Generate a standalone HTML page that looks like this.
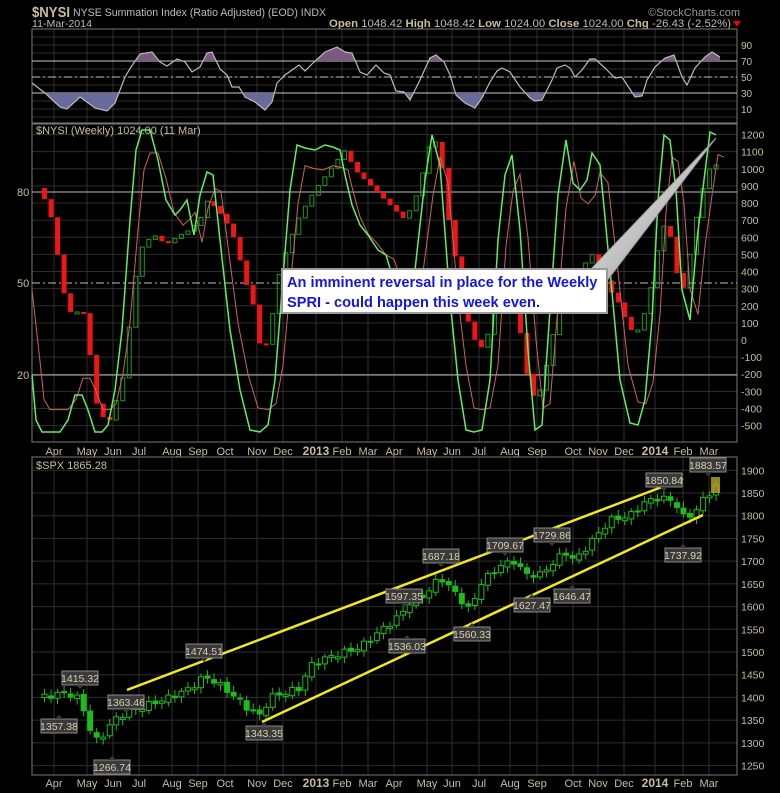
<!DOCTYPE html>
<html><head><meta charset="utf-8">
<style>
html,body{margin:0;padding:0;background:#000;}
body{width:780px;height:793px;overflow:hidden;position:relative;font-family:"Liberation Sans",sans-serif;}
svg{position:absolute;left:0;top:0;}
.callout{position:absolute;left:281px;top:268px;width:327px;height:46px;background:#fff;border:2px solid #9a9a9a;box-sizing:border-box;color:#1414e6;font-weight:bold;font-size:14.6px;line-height:20px;padding:3px 0 0 4px;white-space:nowrap;}
</style></head><body>
<svg id="s" width="780" height="793" xmlns="http://www.w3.org/2000/svg" font-family="Liberation Sans, sans-serif">
<defs><linearGradient id="wg" x1="0" y1="0" x2="1" y2="1"><stop offset="0" stop-color="#fff"/><stop offset="1" stop-color="#888"/></linearGradient></defs>
<text x="32" y="17" fill="#c8bf98" font-size="15" font-weight="bold" textLength="38" lengthAdjust="spacingAndGlyphs">$NYSI</text>
<text x="73" y="16" fill="#bbb" font-size="11" textLength="253" lengthAdjust="spacingAndGlyphs">NYSE Summation Index (Ratio Adjusted) (EOD)  INDX</text>
<text x="740" y="16" fill="#999" font-size="11" text-anchor="end">©StockCharts.com</text>
<text x="32" y="27" fill="#bbb" font-size="10.5" textLength="60" lengthAdjust="spacingAndGlyphs">11-Mar-2014</text>
<text x="329" y="27" fill="#bbb" font-size="11" textLength="402" lengthAdjust="spacingAndGlyphs"><tspan fill="#c8bf98" font-weight="bold">Open</tspan> 1048.42 <tspan fill="#c8bf98" font-weight="bold">High</tspan> 1048.42 <tspan fill="#c8bf98" font-weight="bold">Low</tspan> 1024.00 <tspan fill="#c8bf98" font-weight="bold">Close</tspan> 1024.00 <tspan fill="#c8bf98" font-weight="bold">Chg</tspan> -26.43 (-2.52%)</text>
<polygon points="733,21 741,21 737,27" fill="#e00"/>
<g id="g"></g>
</svg>
<div class="callout">An imminent reversal in place for the Weekly<br>SPRI - could happen this week even.</div>
<script>
var NS="http://www.w3.org/2000/svg",G=document.getElementById('g');
function el(t,a){var e=document.createElementNS(NS,t);for(var k in a)e.setAttribute(k,a[k]);G.appendChild(e);return e;}
function txt(x,y,s,a){var e=el('text',Object.assign({x:x,y:y,fill:'#c8bf98','font-size':11},a||{}));e.textContent=s;return e;}
function interp(p,x){if(x<=p[0][0])return p[0][1];for(var i=1;i<p.length;i++){if(x<=p[i][0]){var t=(x-p[i-1][0])/(p[i][0]-p[i-1][0]);return p[i-1][1]+t*(p[i][1]-p[i-1][1]);}}return p[p.length-1][1];}
var L=32,R=737;
var months=[[54,'Apr'],[87,'May'],[113,'Jun'],[139,'Jul'],[172,'Aug'],[198,'Sep'],[225,'Oct'],[257,'Nov'],[283,'Dec'],[316,'2013',1],[342,'Feb'],[368,'Mar'],[394,'Apr'],[427,'May'],[452,'Jun'],[479,'Jul'],[510,'Aug'],[537,'Sep'],[573,'Oct'],[598,'Nov'],[624,'Dec'],[655,'2014',1],[683,'Feb'],[709,'Mar']];
function panel(top,bot,hlines){
  hlines.forEach(function(y){el('line',{x1:L,x2:R,y1:y,y2:y,stroke:'#2e2e2e'});});
  months.forEach(function(m){el('line',{x1:m[0],x2:m[0],y1:top,y2:bot,stroke:'#2e2e2e'});});
  el('rect',{x:L,y:top,width:R-L,height:bot-top,fill:'none',stroke:'#777'});
}
function axis(y){months.forEach(function(m){txt(m[0],y,m[1],m[2]?{'font-weight':'bold','font-size':12,'text-anchor':'middle'}:{'text-anchor':'middle'});});}
var rt=29,rb=123;var ry=function(v){return 61-(v-70)*0.8;};
var rh=[];for(var v=0;v<=100;v+=10)rh.push(ry(v));panel(rt,rb,rh);
[[70],[30]].forEach(function(v){el('line',{x1:L,x2:R,y1:ry(v[0]),y2:ry(v[0]),stroke:'#ccc'});});
el('line',{x1:L,x2:R,y1:ry(50),y2:ry(50),stroke:'#bbb','stroke-dasharray':'8,3,2,3'});
[90,70,50,30,10].forEach(function(v){txt(741,ry(v)+4,v,{'font-size':10});});
var rp=[[32,83],[45,93],[60,107],[67,109],[80,97],[95,108],[107,111],[115,103],[125,77],[131,67],[140,54],[152,52],[160,62],[167,66],[177,59],[185,62],[192,72],[200,67],[207,53],[212,52],[220,69],[227,75],[232,87],[239,87],[245,97],[255,102],[265,110],[272,102],[277,83],[285,75],[299,65],[305,71],[314,62],[325,52],[337,47],[345,52],[352,53],[360,72],[367,75],[376,65],[384,73],[390,75],[396,91],[404,92],[410,100],[419,82],[430,58],[436,55],[444,62],[450,75],[456,95],[465,103],[475,108],[482,98],[490,82],[497,71],[502,68],[510,72],[520,87],[530,98],[535,101],[542,100],[552,80],[557,68],[565,65],[570,68],[575,77],[582,70],[590,59],[595,59],[605,68],[615,78],[622,77],[635,97],[642,96],[647,80],[655,67],[665,58],[674,55],[682,77],[687,85],[695,68],[705,57],[712,52],[720,57]];
var y70=ry(70),y30=ry(30),up='',dn='';
for(var x=32;x<=720;x+=1){var y=interp(rp,x);up+=x+','+Math.min(y,y70)+' ';dn+=x+','+Math.max(y,y30)+' ';}
el('polygon',{points:'32,'+y70+' '+up+'720,'+y70,fill:'#7a5a80'});
el('polygon',{points:'32,'+y30+' '+dn+'720,'+y30,fill:'#6a6a9a'});
el('polyline',{points:rp.map(function(p){return p.join(',')}).join(' '),fill:'none',stroke:'#bbb','stroke-width':1.2});
var nt=124,nb=442;var ny=function(v){return 340-v*0.1712;};
var nh=[];for(var v=-600;v<=1300;v+=100){var yy=ny(v);if(yy>nt&&yy<nb)nh.push(yy);}panel(nt,nb,nh);
for(var v=-500;v<=1200;v+=100)txt(741,ny(v)+4,v,{'font-size':10.5});
[192,375].forEach(function(y){el('line',{x1:L,x2:R,y1:y,y2:y,stroke:'#bbb'});});
el('line',{x1:L,x2:R,y1:283,y2:283,stroke:'#bbb','stroke-dasharray':'8,3,2,3'});
txt(17,196,'80');txt(17,287,'50');txt(17,379,'20');
txt(36,134,'$NYSI (Weekly) 1024.00 (11 Mar)',{'font-size':11,fill:'#c8bf98'});
var gp=[[32,375],[36,420],[42,432],[60,432],[68,420],[75,395],[82,395],[88,410],[95,432],[102,432],[108,425],[115,390],[122,330],[130,220],[136,150],[142,130],[150,130],[158,160],[166,200],[175,215],[180,210],[187,200],[194,235],[200,195],[207,172],[213,175],[220,240],[230,330],[240,390],[250,430],[260,432],[268,425],[275,380],[282,290],[290,190],[297,145],[305,148],[315,150],[325,145],[333,147],[340,150],[345,175],[352,205],[360,225],[368,235],[378,250],[386,255],[395,285],[405,300],[415,270],[425,180],[432,135],[440,165],[450,300],[458,380],[466,430],[474,432],[482,430],[490,380],[498,240],[505,175],[512,155],[520,230],[528,350],[535,430],[542,425],[550,310],[558,195],[566,140],[573,183],[580,190],[587,180],[592,153],[600,165],[610,270],[620,380],[630,423],[638,425],[645,400],[652,320],[658,200],[664,135],[670,140],[676,190],[682,290],[690,320],[697,240],[704,180],[710,132],[716,135]];
var redp=gp.map(function(p){return [p[0]+8,p[1]*0.85+283*0.15];});redp.unshift([32,290]);
var nyp=[[38,188],[45,200],[52,220],[60,270],[67,310],[75,315],[82,305],[88,335],[95,400],[102,415],[108,425],[115,405],[125,370],[132,300],[140,250],[148,240],[157,235],[165,245],[180,235],[190,230],[200,220],[208,200],[218,210],[228,225],[235,240],[245,280],[255,310],[262,360],[270,330],[280,270],[290,240],[300,215],[315,190],[330,170],[345,150],[355,170],[365,180],[375,190],[385,200],[395,210],[405,220],[415,200],[425,165],[432,135],[440,150],[450,230],[460,280],[470,330],[480,350],[490,330],[500,270],[510,280],[520,330],[528,380],[535,400],[540,390],[548,360],[560,300],[570,320],[580,280],[590,250],[600,270],[610,290],[620,305],[630,330],[640,330],[648,300],[655,270],[660,230],[665,225],[672,240],[678,280],[685,290],[692,240],[700,200],[708,170],[716,165]];
var st=6.52,prev=interp(nyp,38);
for(var x=38+st;x<=717;x+=st){var c=interp(nyp,x);var t=Math.min(prev,c),h=Math.max(2,Math.abs(c-prev));
 if(c>prev)el('rect',{x:x-2.5,y:t,width:5,height:h,fill:'#f01414'});else el('rect',{x:x-2,y:t,width:4,height:h,fill:'none',stroke:'#1a9a1a'});prev=c;}
el('polyline',{points:redp.map(function(p){return p.join(',')}).join(' '),fill:'none',stroke:'#d06060','stroke-width':1});
el('polyline',{points:gp.map(function(p){return p.join(',')}).join(' '),fill:'none',stroke:'#5ef05e','stroke-width':1.5});
axis(455);
var st2=457,sb=775;var sy=function(v){return 493-(v-1850)*0.4543;};
var sh=[];for(var v=1250;v<=1900;v+=50)sh.push(sy(v));panel(st2,sb,sh);
for(var v=1250;v<=1900;v+=50)txt(741,sy(v)+4,v,{'font-size':10.5});
txt(36,469,'$SPX 1865.28',{'font-size':11});
var sp=[[38,1400],[54,1405],[62,1410],[72,1405],[80,1395],[84,1370],[90,1330],[98,1300],[105,1325],[112,1345],[120,1360],[130,1370],[150,1385],[170,1400],[190,1420],[204,1445],[210,1440],[218,1430],[230,1410],[245,1380],[260,1360],[270,1400],[285,1410],[300,1420],[310,1470],[330,1490],[360,1510],[385,1555],[400,1580],[410,1610],[425,1625],[440,1665],[455,1630],[470,1590],[480,1650],[500,1690],[515,1700],[525,1670],[540,1670],[555,1700],[565,1720],[575,1700],[590,1740],[610,1790],[630,1800],[645,1830],[660,1840],[675,1830],[685,1790],[695,1810],[705,1840],[716,1865]];
var pv=interp(sp,38),i=0;
for(var x=38+st;x<=717;x+=st){i++;var c=interp(sp,x)+7*Math.sin(i*2.3);var o=pv+3*Math.cos(i*1.7);
 var t=sy(Math.max(o,c)),b=sy(Math.min(o,c)),h=Math.max(2,b-t);
 el('line',{x1:x,x2:x,y1:t-3-3*Math.abs(Math.sin(i)),y2:t+h+3+3*Math.abs(Math.cos(i)),stroke:'#1cbc1c'});
 if(c>o)el('rect',{x:x-2.5,y:t,width:5,height:h,fill:'#000',stroke:'#1cbc1c'});else el('rect',{x:x-3,y:t,width:6,height:h,fill:'#1cbc1c'});pv=c;}
el('rect',{x:711,y:477,width:9,height:16,fill:'#b8a820',opacity:0.8});
el('line',{x1:127,y1:690,x2:683,y2:479,stroke:'#f2e81a','stroke-width':2.5});
el('line',{x1:262,y1:722,x2:703,y2:515,stroke:'#f2e81a','stroke-width':2.5});
function lab(cx,cy,s,down){el('rect',{x:cx-18,y:cy-7,width:36,height:14,fill:'#3a3a3a',stroke:'#888'});
 if(down)el('polygon',{points:(cx-4)+','+(cy+7)+' '+(cx+4)+','+(cy+7)+' '+cx+','+(cy+11),fill:'#3a3a3a'});else el('polygon',{points:(cx-4)+','+(cy-7)+' '+(cx+4)+','+(cy-7)+' '+cx+','+(cy-11),fill:'#3a3a3a'});
 txt(cx,cy+4,s,{'text-anchor':'middle','font-size':10.5,fill:'#d8d0b0'});}
lab(80,678,'1415.32',1);lab(59,726,'1357.38');lab(126,702,'1363.46',1);lab(112,767,'1266.74');lab(204,651,'1474.51',1);lab(264,733,'1343.35');
lab(404,596,'1597.35',1);lab(407,646,'1536.03');lab(441,556,'1687.18',1);lab(472,634,'1560.33');lab(505,545,'1709.67',1);lab(552,535,'1729.86',1);lab(532,605,'1627.47');lab(572,596,'1646.47');lab(664,480,'1850.84',1);lab(708,465,'1883.57',1);lab(683,555,'1737.92');
axis(787);
el('polygon',{points:'590,270 606,282 716,138',fill:'url(#wg)',stroke:'#999','stroke-width':1});
</script>
</body></html>
